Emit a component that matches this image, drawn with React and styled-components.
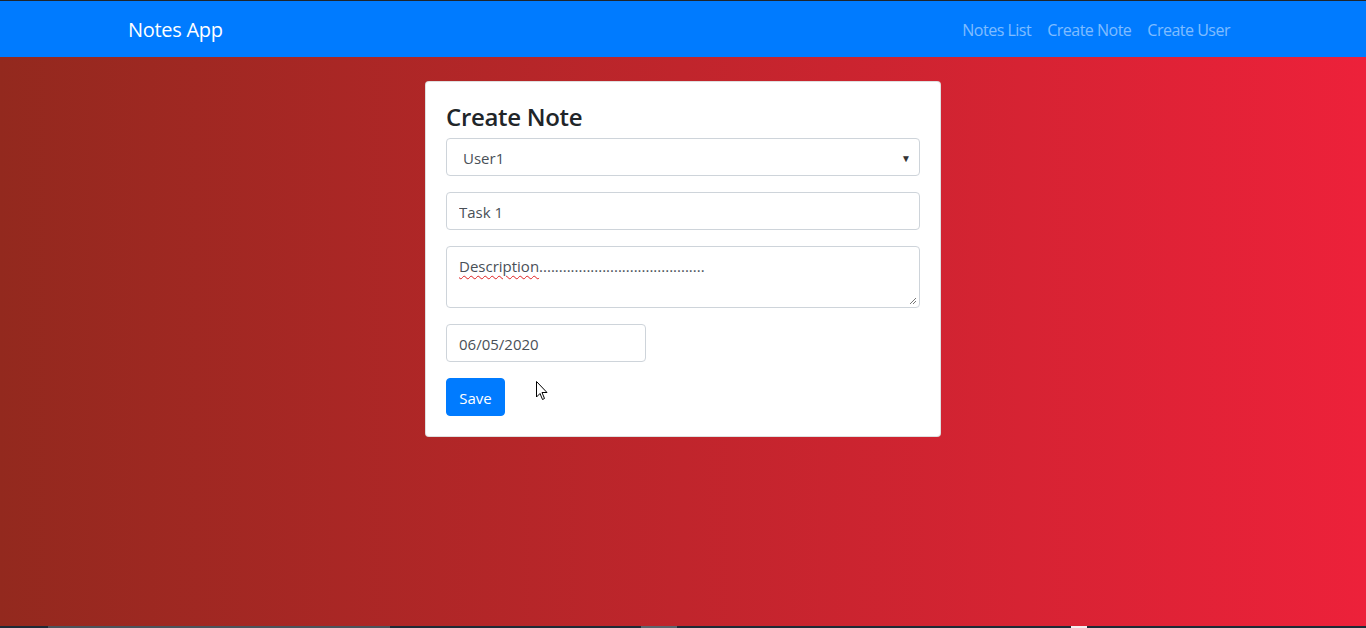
import React from 'react'
import styled, { createGlobalStyle } from 'styled-components'

const GlobalStyle = createGlobalStyle`
  html, body {
    margin: 0;
    padding: 0;
    height: 100%;
  }
  body {
    font-family: 'Open Sans', 'Noto Sans', sans-serif;
    font-size: 16px;
    line-height: 1.5;
    color: #212529;
  }
  * {
    box-sizing: border-box;
  }
`

const Page = styled.div`
  position: relative;
  min-height: 100vh;
  display: flex;
  flex-direction: column;
  background: linear-gradient(to right, #93291e, #ed213a);
`

const Navbar = styled.nav`
  background: #007bff;
  border-top: 1px solid #1f252c;
  padding: 9px 0 7px;
`

const NavContainer = styled.div`
  width: 1140px;
  margin: 0 auto;
  padding: 0 15px;
  display: flex;
  align-items: center;
  justify-content: space-between;
`

const Brand = styled.a`
  color: #fff;
  font-size: 20px;
  line-height: 30px;
  padding: 5px 0;
  letter-spacing: -0.3px;
`

const NavLinks = styled.div`
  display: flex;
`

const NavLink = styled.a`
  color: rgba(255, 255, 255, 0.5);
  padding: 8px 8px;
  line-height: 24px;
  font-size: 16px;
  letter-spacing: -0.5px;
`

const Main = styled.main`
  flex: 1;
  padding-top: 24px;
`

const Card = styled.div`
  width: 516px;
  margin: 0 auto;
  background: #fff;
  border: 1px solid rgba(0, 0, 0, 0.125);
  border-radius: 4px;
  padding: 20px;
`

const Title = styled.h4`
  margin: 0 0 8px;
  padding-top: 1px;
  font-size: 24px;
  font-weight: 600;
  line-height: 27px;
  letter-spacing: -0.3px;
`

const FormGroup = styled.div`
  margin-bottom: 16px;
`

const fieldStyles = `
  display: block;
  font-family: 'Open Sans', 'Noto Sans', sans-serif;
  font-size: 15px;
  color: #495057;
  background: #fff;
  border: 1px solid #ced4da;
  border-radius: 4px;
  padding: 7px 12px 5px;
  line-height: 24px;
  outline: none;
`

const Select = styled.div`
  ${fieldStyles}
  width: 100%;
  height: 38px;
  padding-left: 16px;
  display: flex;
  align-items: center;
  justify-content: space-between;
`

const Caret = styled.span`
  font-size: 10px;
  color: #333;
  margin-right: -4px;
`

const Input = styled.input`
  ${fieldStyles}
  width: ${p => p.$width || '100%'};
  height: 38px;
`

const Misspelled = styled.span`
  text-decoration: underline wavy #e02020;
  text-decoration-thickness: 1px;
  text-underline-offset: 3px;
`

const FakeTextArea = styled.div`
  ${fieldStyles}
  position: relative;
  width: 100%;
  height: 62px;
  white-space: nowrap;
  overflow: hidden;
`

const Grip = styled.svg`
  position: absolute;
  right: 2px;
  bottom: 2px;
`

const Button = styled.button`
  font-family: 'Open Sans', 'Noto Sans', sans-serif;
  font-size: 15px;
  line-height: 24px;
  color: #fff;
  background: #007bff;
  border: 1px solid #007bff;
  border-radius: 4px;
  padding: 7px 12px 5px;
  height: 38px;
  width: 59px;
`

const Cursor = styled.svg`
  position: absolute;
  left: 536px;
  top: 381px;
`

const Taskbar = styled.div`
  height: 2px;
  display: flex;
  background: #1d2a36;
`

const TaskSeg = styled.div`
  margin-left: ${p => p.$left}px;
  width: ${p => p.$width}px;
  background: ${p => p.$color};
`

export default function App() {
  return (
    <>
      <GlobalStyle />
      <Page>
        <Navbar>
          <NavContainer>
            <Brand>Notes App</Brand>
            <NavLinks>
              <NavLink>Notes List</NavLink>
              <NavLink>Create Note</NavLink>
              <NavLink>Create User</NavLink>
            </NavLinks>
          </NavContainer>
        </Navbar>
        <Main>
          <Card>
            <Title>Create Note</Title>
            <FormGroup>
              <Select>
                <span>User1</span>
                <Caret>▼</Caret>
              </Select>
            </FormGroup>
            <FormGroup>
              <Input defaultValue="Task 1" />
            </FormGroup>
            <FormGroup>
              <FakeTextArea>
                <Misspelled>Description</Misspelled>
                ..........................................
                <Grip width="8" height="8" viewBox="0 0 8 8">
                  <path d="M7 1 L1 7 M7 4 L4 7" stroke="#777" strokeWidth="1" />
                </Grip>
              </FakeTextArea>
            </FormGroup>
            <FormGroup>
              <Input $width="200px" defaultValue="06/05/2020" />
            </FormGroup>
            <Button>Save</Button>
          </Card>
        </Main>
        <Taskbar>
          <TaskSeg $left={48} $width={342} $color="#4a545c" />
          <TaskSeg $left={251} $width={36} $color="#5b656d" />
          <TaskSeg $left={394} $width={16} $color="#f3eef0" />
        </Taskbar>
        <Cursor width="12" height="20" viewBox="0 0 12 20">
          <path d="M0.5 0.5 L0.5 16 L4 12.5 L6.5 18.5 L8.5 17.5 L6 11.5 L11 11.5 Z" fill="#fff" stroke="#000" strokeWidth="1" />
        </Cursor>
      </Page>
    </>
  )
}
